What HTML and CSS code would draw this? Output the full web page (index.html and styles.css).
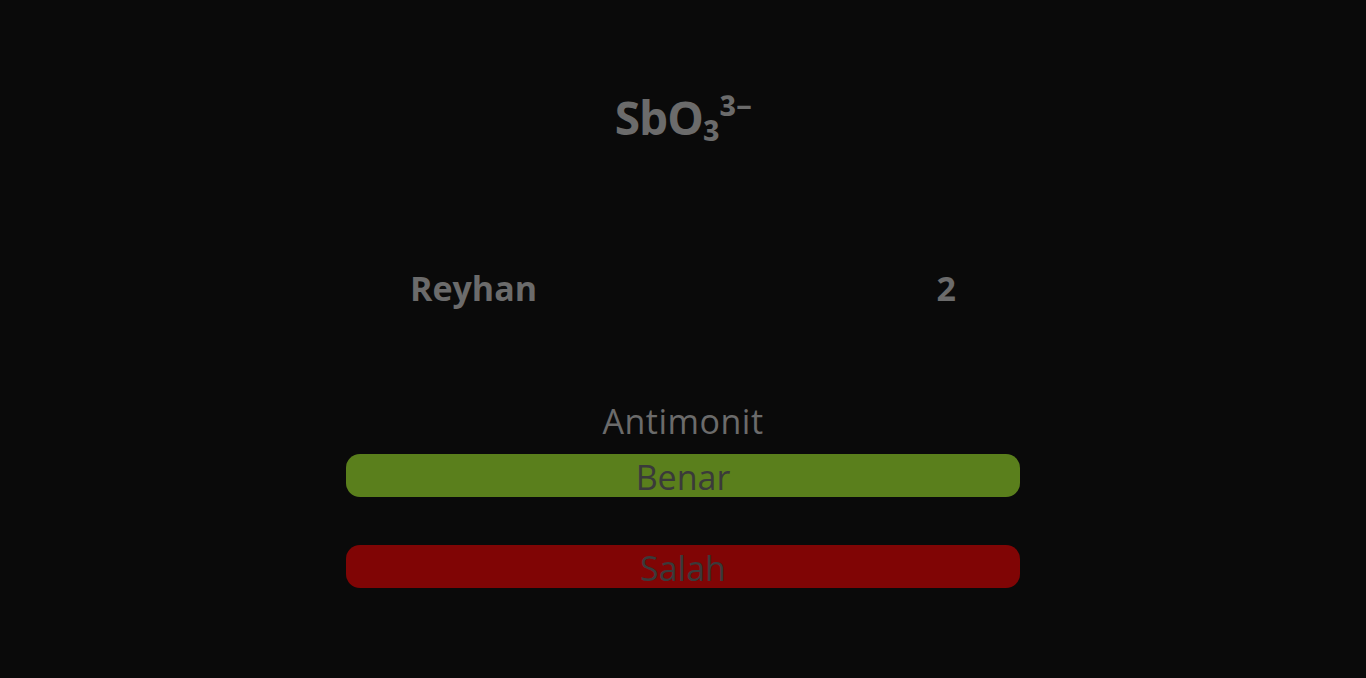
FILE: index.html
```html
<!DOCTYPE html>
<html lang="id">
<head>
<meta charset="utf-8">
<title>Kuis</title>
<link rel="stylesheet" href="styles.css">
</head>
<body>
<main class="page">
  <h1 class="formula">SbO₃³⁻</h1>
  <div class="player">
    <span class="player-name">Reyhan</span>
    <span class="player-score">2</span>
  </div>
  <div class="question">Antimonit</div>
  <div class="answers">
    <button class="answer answer-true">Benar</button>
    <button class="answer answer-false">Salah</button>
  </div>
</main>
</body>
</html>
```
FILE: styles.css
```css
html, body {
  margin: 0;
  padding: 0;
  background: #0a0a0a;
  height: 100%;
}
body {
  font-family: "Open Sans", "Noto Sans", "DejaVu Sans", sans-serif;
  color: #6b6b6b;
}
.page {
  display: flex;
  flex-direction: column;
  align-items: center;
}
.formula {
  margin: 87px 0 0;
  font-size: 46px;
  font-weight: 700;
  line-height: 60px;
  letter-spacing: -1px;
}
.player {
  width: 546px;
  display: flex;
  justify-content: space-between;
  margin-top: 121px;
  font-size: 34px;
  font-weight: 700;
  line-height: 40px;
}
.question {
  margin-top: 93px;
  font-size: 34px;
  line-height: 40px;
  letter-spacing: 0.5px;
}
.answers {
  width: 674px;
  display: flex;
  flex-direction: column;
  gap: 48px;
  margin-top: 13px;
}
.answer {
  height: 43px;
  border: none;
  border-radius: 14px;
  font-family: inherit;
  font-size: 34px;
  line-height: 46px;
  padding: 0;
  color: #3a3a3a;
}
.answer-true { background: #5a7f1c; }
.answer-false { background: #800505; }
```
